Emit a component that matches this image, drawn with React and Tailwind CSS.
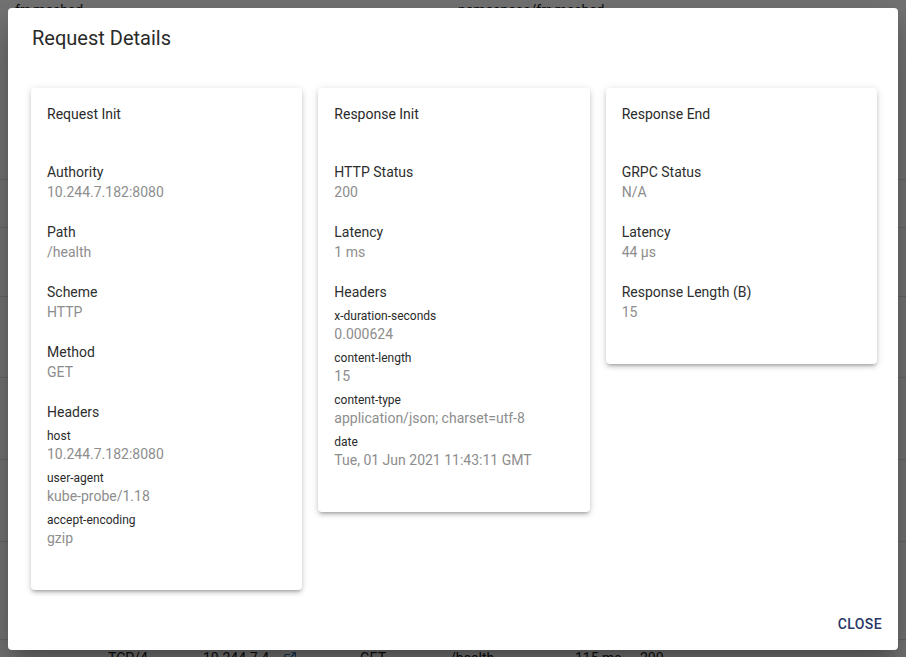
import { ExternalLink } from 'lucide-react';

const cards = [
    {
        title: 'Request Init',
        fields: [
            { label: 'Authority', value: '10.244.7.182:8080' },
            { label: 'Path', value: '/health' },
            { label: 'Scheme', value: 'HTTP' },
            { label: 'Method', value: 'GET' },
        ],
        headers: [
            ['host', '10.244.7.182:8080'],
            ['user-agent', 'kube-probe/1.18'],
            ['accept-encoding', 'gzip'],
        ],
    },
    {
        title: 'Response Init',
        fields: [
            { label: 'HTTP Status', value: '200' },
            { label: 'Latency', value: '1 ms' },
        ],
        headers: [
            ['x-duration-seconds', '0.000624'],
            ['content-length', '15'],
            ['content-type', 'application/json; charset=utf-8'],
            ['date', 'Tue, 01 Jun 2021 11:43:11 GMT'],
        ],
    },
    {
        title: 'Response End',
        fields: [
            { label: 'GRPC Status', value: 'N/A' },
            { label: 'Latency', value: '44 µs' },
            { label: 'Response Length (B)', value: '15' },
        ],
    },
];

function DetailCard({ title, fields, headers }) {
    return (
        <div className="bg-white rounded shadow-[0_3px_3px_-2px_rgba(0,0,0,0.2),0_3px_4px_0_rgba(0,0,0,0.14),0_1px_8px_0_rgba(0,0,0,0.12)]">
            <div className="p-4 text-sm leading-5 text-[#2a2a2a]">{title}</div>
            <div className="px-4 pt-[22px] pb-[22px]">
                {fields.map((f) => (
                    <div key={f.label} className="mb-5">
                        <div className="text-sm leading-5 text-[#2e2e2e]">{f.label}</div>
                        <div className="text-sm leading-5 text-[#8d8d8d]">{f.value}</div>
                    </div>
                ))}
                {headers && (
                    <div className="mb-5">
                        <div className="text-sm leading-5 text-[#2e2e2e]">Headers</div>
                        {headers.map(([k, v]) => (
                            <div key={k} className="mt-1.5">
                                <div className="text-xs leading-4 text-[#2a2a2a]">{k}</div>
                                <div className="text-sm leading-5 text-[#8d8d8d]">{v}</div>
                            </div>
                        ))}
                    </div>
                )}
            </div>
        </div>
    );
}

export default function App() {
    // rows of the page behind the modal
    const rowHeights = ['h-[180px]', 'h-[48px]', 'h-[69px]', 'h-[81px]', 'h-[82px]', 'h-[82px]', 'h-[98px]'];

    return (
        <div className="relative h-[657px] overflow-hidden bg-white font-['Roboto',sans-serif]">
            <div className="text-sm leading-5 text-[#212121]">
                <div className="h-[180px] border-b border-[#e0e0e0] flex">
                    <span className="ml-[15px] w-[443px]">frr-meshed</span>
                    <span>namespace/frr-meshed</span>
                </div>
                {rowHeights.slice(1).map((h, i) => (
                    <div key={i} className={`${h} border-b border-[#e0e0e0]`} />
                ))}
                <div className="flex items-center pt-2">
                    <span className="ml-[108px] w-[95px]">TCP/4</span>
                    <span className="w-[80px]">10.244.7.4</span>
                    <span className="w-[77px] flex">
                        <ExternalLink size={14} className="text-[#1565c0]" />
                    </span>
                    <span className="w-[90px]">GET</span>
                    <span className="w-[125px]">/health</span>
                    <span className="w-[65px]">115 ms</span>
                    <span>200</span>
                </div>
            </div>

            <div className="absolute inset-0 bg-black/[0.54]">
                <div className="ml-2 mt-2 w-[890px] h-[642px] bg-white rounded flex flex-col shadow-[0_11px_15px_-7px_rgba(0,0,0,0.2),0_24px_38px_3px_rgba(0,0,0,0.14),0_9px_46px_8px_rgba(0,0,0,0.12)]">
                    <h2 className="px-6 pt-[14px] pb-[18px] text-[20px] leading-8 font-normal text-[#2a2a2a]">Request Details</h2>
                    <div className="flex-1 pl-[23px] pr-[21px] pt-4">
                        <div className="grid grid-cols-3 gap-4 items-start">
                            {cards.map((c) => (
                                <DetailCard key={c.title} {...c} />
                            ))}
                        </div>
                    </div>
                    <div className="flex justify-end p-2">
                        <button className="px-2 py-1.5 text-sm leading-6 font-medium uppercase tracking-[0.4px] text-[#2a3766] rounded">
                            Close
                        </button>
                    </div>
                </div>
            </div>
        </div>
    );
}
